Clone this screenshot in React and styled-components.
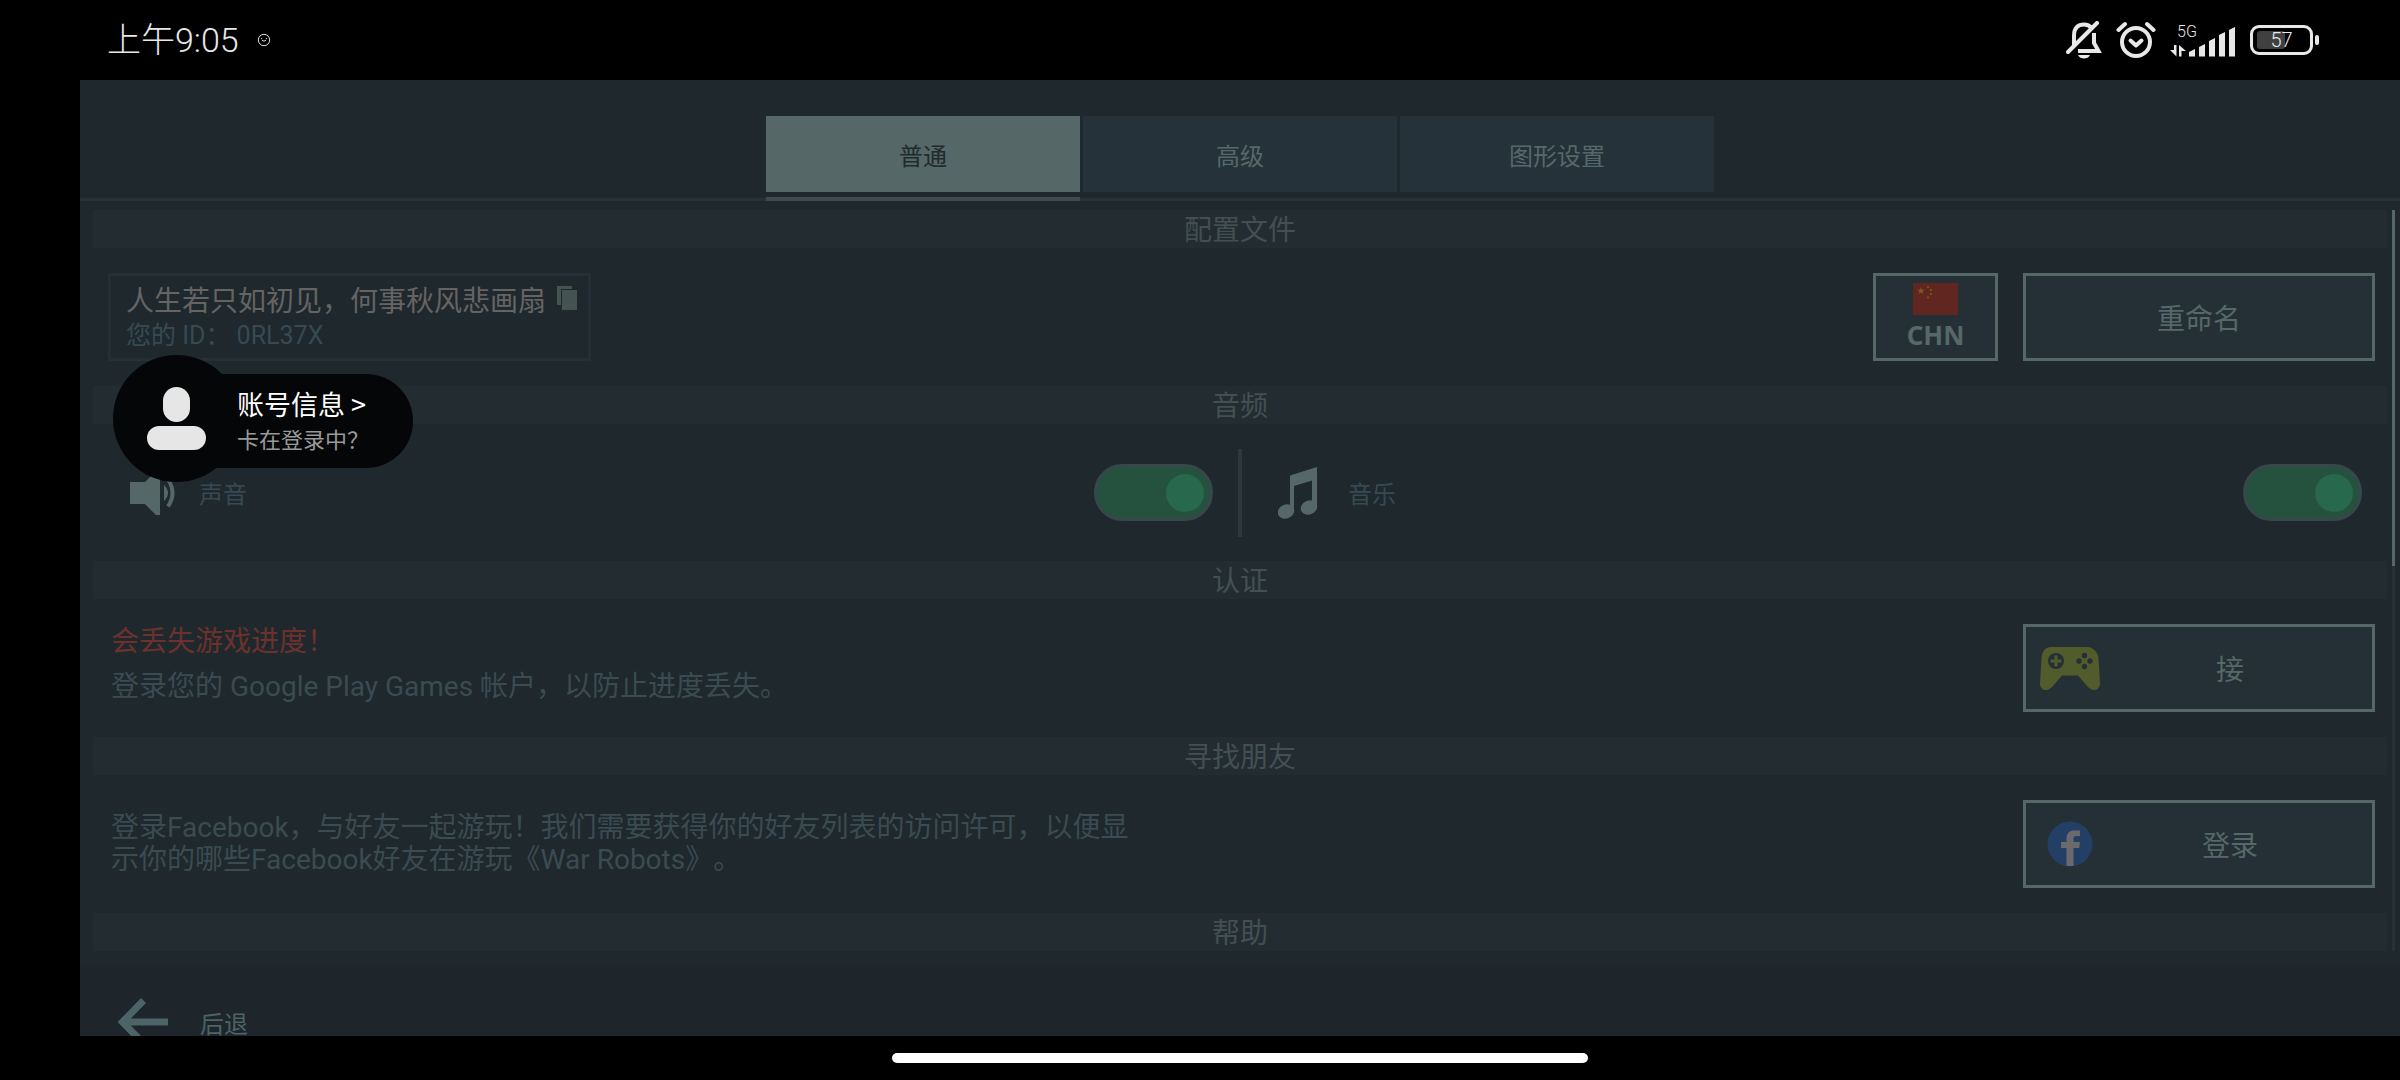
import React, { useState } from 'react';
import styled, { createGlobalStyle } from 'styled-components';

const GlobalStyle = createGlobalStyle`
  * {
    box-sizing: border-box;
  }

  body {
    margin: 0;
    background: #000;
    font-family: Roboto, 'Noto Sans CJK SC', sans-serif;
    font-weight: 400;
    text-spacing-trim: space-all;
  }

  button {
    font: inherit;
    cursor: pointer;
  }
`;

const Screen = styled.div`
  height: 100vh;
  min-height: 600px;
  display: flex;
  flex-direction: column;
  background: #000;
`;

const StatusBar = styled.header`
  flex: 0 0 80px;
  display: flex;
  align-items: center;
  justify-content: space-between;
  padding: 0 81px 0 107px;
  color: #e8e8e8;
  font-weight: 300;
`;

const StatusGroup = styled.div`
  display: flex;
  align-items: center;
  gap: ${({ $gap }) => $gap}px;
`;

const Clock = styled.span`
  font-size: 34px;
  line-height: 40px;
`;

const Signal = styled.div`
  display: flex;
  flex-direction: column;
  width: 66px;
`;

const Network = styled.span`
  padding-left: 7px;
  height: 16px;
  font-size: 16px;
  line-height: 16px;
`;

const SignalBars = styled.svg`
  margin-top: -14px;
`;

const Battery = styled.div`
  display: flex;
  align-items: center;
  gap: 2px;

  &::after {
    content: '';
    width: 4px;
    height: 10px;
    border-radius: 2px;
    background: #e8e8e8;
  }
`;

const BatteryBody = styled.div`
  width: 63px;
  height: 30px;
  padding: 3px 4px;
  border: 3px solid #e8e8e8;
  border-radius: 9px;
  display: grid;
`;

const BatteryLevel = styled.div`
  grid-area: 1 / 1;
  height: 18px;
  border-radius: 3px;
  background: #404040;
`;

const BatteryText = styled.span`
  grid-area: 1 / 1;
  text-align: center;
  font-size: 20px;
  line-height: 18px;
`;

const Game = styled.main`
  position: relative;
  flex: 1;
  min-height: 0;
  margin-left: 80px;
  display: flex;
  flex-direction: column;
  overflow: hidden;
  background: #1e282d;
`;

const Tabs = styled.nav`
  flex: 0 0 121px;
  display: flex;
  justify-content: center;
  gap: 3px;
  padding-top: 36px;
  border-bottom: 3px solid #25323a;
`;

const Tab = styled.button`
  width: 314px;
  height: 76px;
  padding: 0;
  border: 0;
  background: ${({ $active }) => ($active ? '#556766' : '#25323a')};
  color: ${({ $active }) => ($active ? '#1f2b2c' : '#566869')};
  font-size: 24px;
  position: relative;

  &::after {
    content: '';
    display: ${({ $active }) => ($active ? 'block' : 'none')};
    position: absolute;
    left: 0;
    right: 0;
    top: 81px;
    height: 4px;
    background: #3e4b4f;
  }
`;

const Content = styled.div`
  flex: 1 0 auto;
  display: flex;
  gap: 5px;
  padding: 9px 5px 16px 13px;
`;

const Sections = styled.div`
  flex: 1;
`;

const SectionTitle = styled.h2`
  margin: 0;
  height: 38px;
  padding-top: 2px;
  background: #222c31;
  color: #435051;
  font-size: 28px;
  font-weight: 400;
  line-height: 38px;
  text-align: center;
`;

const Row = styled.div`
  height: 138px;
  display: flex;
  align-items: center;
  gap: 25px;
  padding: 0 12px 0 15px;
`;

const ScrollTrack = styled.div`
  width: 3px;
  background: #25323a;
`;

const ScrollThumb = styled.div`
  height: 48%;
  background: #556766;
`;

const Profile = styled.div`
  width: 483px;
  height: 88px;
  margin-right: auto;
  padding: 8px 11px 0 15px;
  border: 3px solid #243035;
  display: flex;
  justify-content: space-between;
`;

const PlayerName = styled.div`
  color: #656463;
  font-size: 28px;
  line-height: 36px;
  white-space: nowrap;
`;

const PlayerId = styled.div`
  color: #374a54;
  font-size: 25px;
  line-height: 32px;
`;

const CopyButton = styled.button`
  width: 20px;
  height: 24px;
  margin-top: 2px;
  padding: 0;
  border: 0;
  background: none;
`;

const BoxButton = styled.button`
  width: ${({ $width }) => $width}px;
  height: 88px;
  padding: 0;
  border: 3px solid #556766;
  background: #243035;
  color: #566867;
  display: flex;
  align-items: center;
  justify-content: center;
  font-size: 28px;
`;

const CountryButton = styled(BoxButton)`
  flex-direction: column;
  gap: 4px;
  font-family: 'Noto Sans', sans-serif;
  font-size: 26px;
  font-weight: 700;
  line-height: 32px;
`;

const ButtonIcon = styled.span`
  width: 88px;
  display: flex;
  justify-content: center;
`;

const ButtonText = styled.span`
  flex: 1;
  padding-right: 26px;
  text-align: center;
`;

const AudioRow = styled.div`
  height: 137px;
  display: flex;
  align-items: center;
`;

const AudioHalf = styled.label`
  flex: 1;
  display: flex;
  align-items: center;
  gap: 24px;
  padding: 0 25px 0 36px;
  color: #374a54;
  font-size: 24px;
`;

const AudioIcon = styled.svg`
  width: 46px;
  height: 52px;
`;

const Divider = styled.div`
  width: 4px;
  height: 88px;
  background: #2e393c;
`;

const Toggle = styled.input`
  appearance: none;
  width: 119px;
  height: 57px;
  margin: 0 0 0 auto;
  padding: 0 6px;
  border: 3px solid #37474a;
  border-radius: 29px;
  background: #25513f;
  display: flex;
  align-items: center;
  justify-content: flex-start;

  &:checked {
    justify-content: flex-end;
  }

  &::before {
    content: '';
    width: 38px;
    height: 38px;
    border-radius: 50%;
    background: #28684c;
  }
`;

const Message = styled.div`
  flex: 1;
  padding: 0 0 ${({ $raise }) => $raise || 0}px 3px;
  color: #3b4b52;
  font-size: 28px;
`;

const Paragraph = styled.p`
  margin: 0;
  max-width: 1020px;
  line-height: ${({ $line }) => $line}px;
  color: ${({ $warn }) => ($warn ? '#6d312d' : 'inherit')};
`;

const BackButton = styled.button`
  flex: 0 0 110px;
  display: flex;
  align-items: center;
  gap: 32px;
  padding: 0 38px;
  border: 0;
  background: #1e252b;
  color: #4c6467;
  font-size: 24px;
`;

const AccountBadge = styled.button`
  position: absolute;
  left: 33px;
  top: 275px;
  padding: 0;
  border: 0;
  background: none;
  display: flex;
  align-items: center;
`;

const Avatar = styled.span`
  position: relative;
  z-index: 1;
  width: 127px;
  height: 127px;
  border-radius: 50%;
  background: #050608;
  display: flex;
  flex-direction: column;
  align-items: center;
  justify-content: center;
  gap: 4px;
`;

const AvatarHead = styled.span`
  width: 27px;
  height: 35px;
  border-radius: 14px;
  background: #e6e6e6;
`;

const AvatarBody = styled.span`
  width: 59px;
  height: 24px;
  border-radius: 12px;
  background: #e6e6e6;
`;

const BadgeText = styled.span`
  width: 237px;
  height: 94px;
  margin: 4px 0 0 -64px;
  padding: 12px 0 0 61px;
  border-radius: 0 47px 47px 0;
  background: #050608;
  display: flex;
  flex-direction: column;
  text-align: left;
  white-space: nowrap;
`;

const BadgeTitle = styled.span`
  color: #fff;
  font-family: 'Noto Sans CJK SC', sans-serif;
  font-size: 27px;
  line-height: 36px;
`;

const BadgeSub = styled.span`
  color: #999;
  font-family: 'Noto Sans CJK SC', sans-serif;
  font-size: 22px;
  line-height: 32px;
`;

const NavBar = styled.footer`
  flex: 0 0 44px;
  display: flex;
  align-items: center;
  justify-content: center;
  padding-left: 80px;
`;

const HomeIndicator = styled.div`
  width: 30%;
  height: 10px;
  border-radius: 5px;
  background: #fff;
`;

const FaceIcon = () => (
  <svg width="14" height="14" viewBox="0 0 14 14" fill="none" stroke="#ddd">
    <circle cx="7" cy="7" r="5.7" />
    <path d="M4.6 6.2V5M9.400 6.200V5M5 7.200q2 2 4 0" />
  </svg>
);

const BellOffIcon = () => (
  <svg width="36" height="38" viewBox="0 0 36 38" fill="none" stroke="#e8e8e8" strokeWidth="4">
    <path d="M8 24V14.5C8 7 12 3.5 18 3.5c3.5 0 6 1.500 7.500 3.500" />
    <path d="M28 12v10l4.500 8H12" />
    <path d="M2 31L31 2" strokeLinecap="round" />
    <path d="M12 34h12c-1 2.500-3.500 3.500-6 3.500S13 36.500 12 34z" fill="#e8e8e8" stroke="none" />
  </svg>
);

const AlarmIcon = () => (
  <svg
    width="40"
    height="38"
    viewBox="0 0 40 38"
    fill="none"
    stroke="#e8e8e8"
    strokeWidth="4"
    strokeLinecap="round"
    strokeLinejoin="round"
  >
    <circle cx="20" cy="21" r="14" />
    <path d="M14.500 19.500l5.500 5 5.500-5" />
    <path d="M2.500 9L9 3M37.500 9L31 3" />
  </svg>
);

// [x, top] of each signal bar
const bars = [
  [19, 23],
  [29, 18],
  [39, 12],
  [49, 6],
  [59, 1]
];

const CopyIcon = () => (
  <svg width="20" height="24" viewBox="0 0 20 24" fill="#44534f">
    <path d="M0 0h15v3H4v16H0z" />
    <path d="M5 4h15v20H5z" />
  </svg>
);

const star = 'M0-4l.95 2.7h2.85L1.500.4l.85 2.8L0 1.500l-2.350 1.700.85-2.800-2.300-1.700h2.850z';

const FlagIcon = () => (
  <svg width="45" height="32" viewBox="0 0 45 32">
    <rect width="45" height="32" fill="#60261f" />
    <path d={star} transform="translate(8 8)" fill="#7c5a20" />
    <g fill="#7c5a20">
      <circle cx="15" cy="4" r="1.100" />
      <circle cx="18" cy="7" r="1.100" />
      <circle cx="18" cy="11" r="1.100" />
      <circle cx="15" cy="14.500" r="1.100" />
    </g>
  </svg>
);

const GamepadIcon = () => (
  <svg width="60" height="43" viewBox="0 0 60 43">
    <path
      d="M11 0h36c6 0 11 5 11.500 11L60 36c.3 4-2.500 7-6 7-2.500 0-4.500-1.500-6-3L38 28.500H22L12 40c-1.500 1.500-3.500 3-6 3-3.500 0-6.300-3-6-7L1.500 11C2 5 5 0 11 0z"
      fill="#525b2c"
    />
    <circle cx="16" cy="14" r="8" fill="#243035" />
    <path d="M16 8.500v11M10.500 14h11" stroke="#525b2c" strokeWidth="3" />
    <g fill="#243035">
      <circle cx="44.500" cy="8.500" r="2.700" />
      <circle cx="39" cy="14" r="2.700" />
      <circle cx="50" cy="14" r="2.700" />
      <circle cx="44.500" cy="19.500" r="2.700" />
    </g>
  </svg>
);

const FacebookIcon = () => (
  <svg width="46" height="46" viewBox="0 0 46 46">
    <circle cx="23" cy="23" r="22.500" fill="#243f66" />
    <path
      d="M19.500 45V27H14v-6h5.500v-3c0-6 3-8.500 8-8.500h5.500v5.500h-3.500c-2.200 0-3 .8-3 3v3H33l-.8 6h-5.700v18z"
      fill="#6a6a6c"
    />
  </svg>
);

const ArrowIcon = () => (
  <svg width="50" height="48" viewBox="0 0 50 48" fill="none" stroke="#4c6467" strokeWidth="7">
    <path d="M50 24H5M25.500 2.500L4.500 24l21 21.500" />
  </svg>
);

const tabs = ['普通', '高级', '图形设置'];

function App() {
  const [tab, setTab] = useState(0);

  return (
    <Screen>
      <GlobalStyle />

      <StatusBar>
        <StatusGroup $gap={18}>
          <Clock>上午9:05</Clock>
          <FaceIcon />
        </StatusGroup>

        <StatusGroup $gap={14}>
          <BellOffIcon />
          <AlarmIcon />
          <Signal>
            <Network>5G</Network>
            <SignalBars width="66" height="31" viewBox="0 0 66 31" fill="#e8e8e8">
              <path d="M4 19h2.500v11.500L0 24h4zM9 30.500V19l7 6h-4.500v5.500z" />
              {bars.map(([x, top]) => (
                <path key={x} d={`M${x} ${top + 3}l6-3V30.500h-6z`} />
              ))}
            </SignalBars>
          </Signal>
          <Battery>
            <BatteryBody>
              <BatteryLevel style={{ width: '57%' }} />
              <BatteryText>57</BatteryText>
            </BatteryBody>
          </Battery>
        </StatusGroup>
      </StatusBar>

      <Game>
        <Tabs>
          {tabs.map((name, i) => (
            <Tab key={name} $active={tab === i} onClick={() => setTab(i)}>
              {name}
            </Tab>
          ))}
        </Tabs>

        <Content>
          <Sections>
            <SectionTitle>配置文件</SectionTitle>
            <Row>
              <Profile>
                <div>
                  <PlayerName>人生若只如初见，何事秋风悲画扇</PlayerName>
                  <PlayerId>您的 ID： 0RL37X</PlayerId>
                </div>
                <CopyButton aria-label="复制">
                  <CopyIcon />
                </CopyButton>
              </Profile>
              <CountryButton $width={125}>
                <FlagIcon />
                CHN
              </CountryButton>
              <BoxButton $width={352}>重命名</BoxButton>
            </Row>

            <SectionTitle>音频</SectionTitle>
            <AudioRow>
              <AudioHalf>
                <AudioIcon viewBox="0 0 46 52">
                  <path d="M1 15h15L27 4h4v44h-4L16 37H1z" fill="#556766" />
                  <path d="M35 18q8 8 0 16z" fill="#556766" />
                  <path d="M39 12.500q9 13.500 0 27" fill="none" stroke="#556766" strokeWidth="4" />
                </AudioIcon>
                声音
                <Toggle type="checkbox" defaultChecked />
              </AudioHalf>
              <Divider />
              <AudioHalf>
                <AudioIcon viewBox="0 0 46 52" fill="#556766">
                  <path d="M12 8.500L39 0v40h-5V13.500l-18 5.500v26h-4z" />
                  <ellipse cx="8" cy="44.500" rx="8.500" ry="7" transform="rotate(-25 8 44.500)" />
                  <ellipse cx="31" cy="40.500" rx="8.500" ry="7" transform="rotate(-25 31 40.500)" />
                </AudioIcon>
                音乐
                <Toggle type="checkbox" defaultChecked />
              </AudioHalf>
            </AudioRow>

            <SectionTitle>认证</SectionTitle>
            <Row>
              <Message $raise={8}>
                <Paragraph $line={45} $warn>会丢失游戏进度！</Paragraph>
                <Paragraph $line={45}>登录您的 Google Play Games 帐户，以防止进度丢失。</Paragraph>
              </Message>
              <BoxButton $width={352}>
                <ButtonIcon>
                  <GamepadIcon />
                </ButtonIcon>
                <ButtonText>接</ButtonText>
              </BoxButton>
            </Row>

            <SectionTitle>寻找朋友</SectionTitle>
            <Row>
              <Message>
                <Paragraph $line={32}>
                  登录Facebook，与好友一起游玩！我们需要获得你的好友列表的访问许可，以便显示你的哪些Facebook好友在游玩《War Robots》。
                </Paragraph>
              </Message>
              <BoxButton $width={352}>
                <ButtonIcon>
                  <FacebookIcon />
                </ButtonIcon>
                <ButtonText>登录</ButtonText>
              </BoxButton>
            </Row>

            <SectionTitle>帮助</SectionTitle>
          </Sections>

          <ScrollTrack>
            <ScrollThumb />
          </ScrollTrack>
        </Content>

        <BackButton>
          <ArrowIcon />
          后退
        </BackButton>

        <AccountBadge>
          <Avatar>
            <AvatarHead />
            <AvatarBody />
          </Avatar>
          <BadgeText>
            <BadgeTitle>账号信息 &gt;</BadgeTitle>
            <BadgeSub>卡在登录中？</BadgeSub>
          </BadgeText>
        </AccountBadge>
      </Game>

      <NavBar>
        <HomeIndicator />
      </NavBar>
    </Screen>
  );
}

export default App;
